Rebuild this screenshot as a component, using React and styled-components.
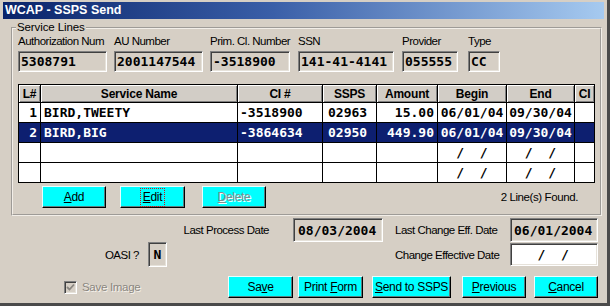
import React from 'react';
import styled, { createGlobalStyle } from 'styled-components';

const BG = '#d6cfc5';
const SANS = '"Liberation Sans", Arial, sans-serif';
const MONO = '"DejaVu Sans Mono", "Liberation Mono", monospace';

const Global = createGlobalStyle`
  html, body { margin: 0; padding: 0; background: ${BG}; }
  body { font-family: ${SANS}; font-size: 11px; color: #000; }
  * { box-sizing: border-box; }
`;

const Window = styled.div`
  width: 610px;
  height: 306px;
  background: ${BG};
  padding: 2px 3px 0 3px;
  border-right: 3px solid #4a4a4a;
  border-bottom: 3px solid #4a4a4a;
  display: flex;
  flex-direction: column;
  overflow: hidden;
`;

const TitleBar = styled.div`
  height: 17px;
  flex: none;
  background: linear-gradient(to right, #0a246a 0%, #3a5fa8 45%, #a6caf0 100%);
  color: #fff;
  font-weight: bold;
  font-size: 12.5px;
  line-height: 17px;
  padding-left: 2px;
`;

const GroupBox = styled.fieldset`
  margin: 2px 0 0 8px;
  width: 591px;
  padding: 1px 5px 6px 5px;
  border: 2px groove #f2eee8;
  min-width: 0;
`;

const Legend = styled.legend`
  padding: 0 1px;
  margin-left: -2px;
  font-size: 11.5px;
  line-height: 13px;
  letter-spacing: -0.1px;
`;

const FieldRow = styled.div`
  display: flex;
  align-items: flex-start;
`;

const FieldCol = styled.div`
  width: ${p => p.$w}px;
  margin-left: ${p => p.$ml || 0}px;
  display: flex;
  flex-direction: column;
`;

const FieldLabel = styled.div`
  height: 13px;
  line-height: 13px;
  white-space: nowrap;
  font-size: 11.5px;
  letter-spacing: -0.5px;
`;

const ReadField = styled.div`
  width: ${p => (p.$w ? `${p.$w}px` : '100%')};
  height: ${p => p.$h || 21}px;
  margin-top: ${p => p.$mt || 0}px;
  margin-left: ${p => p.$ml || 0}px;
  flex: none;
  background: ${p => (p.$white ? '#fff' : 'transparent')};
  border-style: solid;
  border-width: 1px;
  border-color: #808080 #fff #fff #808080;
  box-shadow: inset 1px 1px 0 #404040, inset -1px -1px 0 #e6e2da;
  font-family: ${MONO};
  font-weight: bold;
  font-size: 13px;
  display: flex;
  align-items: center;
  justify-content: ${p => (p.$center ? 'center' : 'flex-start')};
  padding-left: ${p => (p.$center ? 0 : p.$pl ?? 3)}px;
  white-space: pre;
`;

const Grid = styled.div`
  margin-top: 12px;
  width: 577px;
  display: grid;
  grid-template-columns: ${p => p.$cols};
  grid-template-rows: 17px repeat(4, 19px);
  gap: 1px;
  background: #000;
  border: 1px solid #000;
`;

const HeadCell = styled.div`
  background: #d2cdc6;
  box-shadow: inset 1px 1px 0 #fff, inset -1px -1px 0 #808080;
  font-weight: bold;
  font-size: 12px;
  letter-spacing: -0.2px;
  display: flex;
  align-items: center;
  justify-content: center;
  white-space: nowrap;
`;

const Cell = styled.div`
  background: ${p => (p.$sel ? '#0d1f70' : '#fff')};
  color: ${p => (p.$sel ? '#fff' : '#000')};
  font-family: ${MONO};
  font-weight: bold;
  font-size: 13px;
  display: flex;
  align-items: center;
  justify-content: ${p =>
    p.$align === 'right' ? 'flex-end' : p.$align === 'center' ? 'center' : 'flex-start'};
  padding: 0 3px 0 ${p => p.$pl ?? 3}px;
  white-space: pre;
  overflow: hidden;
`;

const ButtonRow = styled.div`
  display: flex;
  align-items: center;
  margin-top: 3px;
  height: 22px;
`;

const CyanButton = styled.div`
  width: ${p => p.$w}px;
  height: 22px;
  margin-left: ${p => p.$ml || 0}px;
  flex: none;
  background: #00ffff;
  border-style: solid;
  border-width: 1px;
  border-color: #e8ffff #000 #000 #e8ffff;
  box-shadow: inset -1px -1px 0 #5a7f80;
  font-family: ${SANS};
  font-size: 12px;
  letter-spacing: -0.3px;
  color: ${p => (p.$disabled ? '#7f8f8f' : '#000')};
  text-shadow: ${p => (p.$disabled ? '1px 1px 0 #f4ffff' : 'none')};
  display: flex;
  align-items: center;
  justify-content: center;
  white-space: nowrap;
  u { text-decoration: underline; text-underline-offset: 1px; }
`;

const FocusRing = styled.span`
  outline: 1px dotted #d01010;
  outline-offset: 1px;
  padding: 1px 1px 2px;
  line-height: 12px;
`;

const FoundText = styled.div`
  margin-left: auto;
  margin-right: 17px;
  font-size: 11.5px;
  letter-spacing: -0.4px;
`;

const LowerRow = styled.div`
  display: flex;
  align-items: center;
  height: ${p => p.$h}px;
  margin-top: ${p => p.$mt || 0}px;
  flex: none;
`;

const SideLabel = styled.div`
  width: ${p => p.$w}px;
  margin-left: ${p => p.$ml || 0}px;
  text-align: ${p => p.$align || 'left'};
  white-space: nowrap;
  font-size: 11.5px;
  letter-spacing: -0.5px;
  flex: none;
`;

const CheckGroup = styled.div`
  width: 225px;
  padding-left: 61px;
  display: flex;
  align-items: center;
  flex: none;
`;

const CheckBox = styled.span`
  width: 13px;
  height: 13px;
  border-style: solid;
  border-width: 1px;
  border-color: #808080 #fff #fff #808080;
  box-shadow: inset 1px 1px 0 #404040, inset -1px -1px 0 #e6e2da;
  display: flex;
  align-items: center;
  justify-content: center;
`;

const CheckLabel = styled.span`
  margin-left: 5px;
  color: #8a8680;
  text-shadow: 1px 1px 0 #f6f2ec;
  letter-spacing: -0.3px;
  font-size: 11.5px;
`;

const topFields = [
  { label: 'Authorization Num', value: '5308791', w: 89, ml: 0 },
  { label: 'AU Number', value: '2001147544', w: 89, ml: 7 },
  { label: 'Prim. Cl. Number', value: '-3518900', w: 80, ml: 7 },
  { label: 'SSN', value: '141-41-4141', w: 96, ml: 8 },
  { label: 'Provider', value: '055555', w: 56, ml: 8 },
  { label: 'Type', value: 'CC', w: 32, ml: 10 },
];

const cols = [
  { key: 'l', title: 'L#', w: 21, align: 'right' },
  { key: 'name', title: 'Service Name', w: 196, align: 'left' },
  { key: 'ci', title: 'CI #', w: 84, align: 'left', pl: 2 },
  { key: 'ssps', title: 'SSPS', w: 53, align: 'left', pl: 5 },
  { key: 'amt', title: 'Amount', w: 60, align: 'right' },
  { key: 'begin', title: 'Begin', w: 68, align: 'center' },
  { key: 'end', title: 'End', w: 67, align: 'center' },
  { key: 'cl', title: 'CI', w: 19, align: 'center' },
];

const rows = [
  { l: '1', name: 'BIRD,TWEETY', ci: '-3518900', ssps: '02963', amt: '15.00', begin: '06/01/04', end: '09/30/04', cl: '' },
  { l: '2', name: 'BIRD,BIG', ci: '-3864634', ssps: '02950', amt: '449.90', begin: '06/01/04', end: '09/30/04', cl: '', sel: true },
  { l: '', name: '', ci: '', ssps: '', amt: '', begin: '  /  /  ', end: '  /  /  ', cl: '' },
  { l: '', name: '', ci: '', ssps: '', amt: '', begin: '  /  /  ', end: '  /  /  ', cl: '' },
];

export default function App() {
  return (
    <>
      <Global />
      <Window>
        <TitleBar>WCAP - SSPS Send</TitleBar>
        <GroupBox>
          <Legend>Service Lines</Legend>
          <FieldRow>
            {topFields.map(f => (
              <FieldCol key={f.label} $w={f.w} $ml={f.ml}>
                <FieldLabel>{f.label}</FieldLabel>
                <ReadField $mt={3} $pl={2}>{f.value}</ReadField>
              </FieldCol>
            ))}
          </FieldRow>
          <Grid $cols={cols.map(c => `${c.w}px`).join(' ')}>
            {cols.map(c => (
              <HeadCell key={c.key}>{c.title}</HeadCell>
            ))}
            {rows.map((r, i) =>
              cols.map(c => (
                <Cell key={`${i}-${c.key}`} $sel={r.sel} $align={c.align} $pl={c.pl}>
                  {r[c.key]}
                </Cell>
              ))
            )}
          </Grid>
          <ButtonRow>
            <CyanButton $w={64} $ml={24}><span><u>A</u>dd</span></CyanButton>
            <CyanButton $w={65} $ml={14}><FocusRing><u>E</u>dit</FocusRing></CyanButton>
            <CyanButton $w={64} $ml={17} $disabled><span><u>D</u>elete</span></CyanButton>
            <FoundText>2 Line(s) Found.</FoundText>
          </ButtonRow>
        </GroupBox>
        <LowerRow $h={24} $mt={2}>
          <SideLabel $w={266} $align="right">Last Process Date</SideLabel>
          <ReadField $w={90} $h={24} $ml={24} $pl={4}>08/03/2004</ReadField>
          <SideLabel $w={115} $ml={12}>Last Change Eff. Date</SideLabel>
          <ReadField $w={88} $h={24} $pl={3}>06/01/2004</ReadField>
        </LowerRow>
        <LowerRow $h={25}>
          <SideLabel $w={136} $align="right">OASI ?</SideLabel>
          <ReadField $w={19} $h={25} $ml={9} $center>N</ReadField>
          <SideLabel $w={115} $ml={228}>Change Effective Date</SideLabel>
          <ReadField $w={88} $h={23} $white $pl={3}>{'   /  /'}</ReadField>
        </LowerRow>
        <LowerRow $h={22} $mt={9}>
          <CheckGroup>
            <CheckBox>
              <svg width="9" height="9" viewBox="0 0 9 9">
                <path d="M1 4 L3.5 6.5 L8 1.5" fill="none" stroke="#8a8680" strokeWidth="1.8" />
              </svg>
            </CheckBox>
            <CheckLabel>Save Image</CheckLabel>
          </CheckGroup>
          <CyanButton $w={65}><span>Sa<u>v</u>e</span></CyanButton>
          <CyanButton $w={65} $ml={5}><span>Print <u>F</u>orm</span></CyanButton>
          <CyanButton $w={79} $ml={9}><span><u>S</u>end to SSPS</span></CyanButton>
          <CyanButton $w={64} $ml={11}><span><u>P</u>revious</span></CyanButton>
          <CyanButton $w={64} $ml={8}><span><u>C</u>ancel</span></CyanButton>
        </LowerRow>
      </Window>
    </>
  );
}
